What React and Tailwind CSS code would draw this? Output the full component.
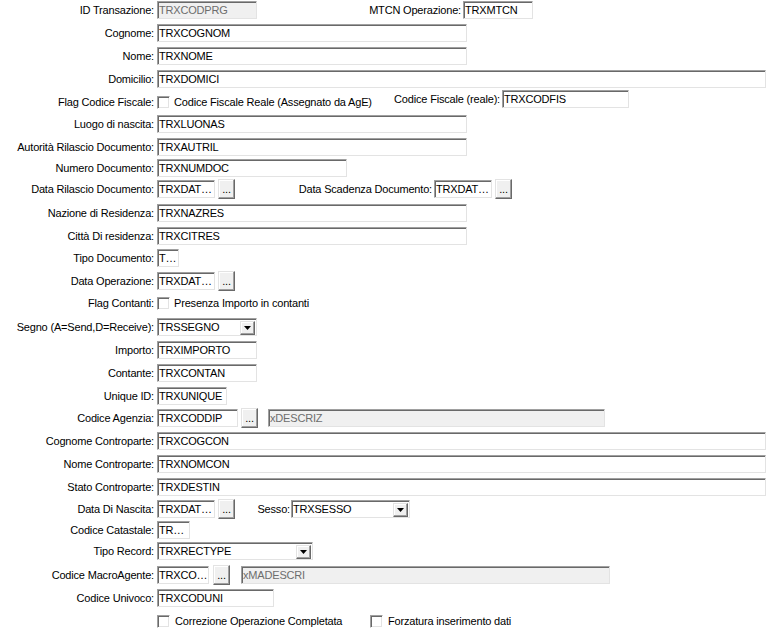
import React from 'react';

// Classic WinForms-style data entry form (sunken edits, "..." pickers, combos)

function Label({ children }) {
    return <div className="w-[154px] shrink-0 text-right whitespace-nowrap mr-[3px]">{children}</div>;
}

function Box({ w, text, disabled, className = '' }) {
    return (
        <div
            className={`${w} ${className} h-[18px] shrink-0 flex items-center pl-[1px] overflow-hidden whitespace-nowrap border border-t-[#a0a0a0] border-l-[#a0a0a0] border-b-[#e3e3e3] border-r-[#e3e3e3] shadow-[inset_1px_1px_0_#696969] ${disabled ? 'bg-[#f0f0f0] text-[#6d6d6d]' : 'bg-white text-black'}`}
        >
            {text}
        </div>
    );
}

function Combo({ w, text, className = '' }) {
    return (
        <div
            className={`${w} ${className} h-[18px] shrink-0 flex items-center justify-between pl-[1px] bg-white border border-t-[#a0a0a0] border-l-[#a0a0a0] border-b-[#e3e3e3] border-r-[#e3e3e3] shadow-[inset_1px_1px_0_#696969]`}
        >
            <span className="whitespace-nowrap">{text}</span>
            <div className="w-[15px] h-[14px] mr-[1px] mt-[1px] flex items-center justify-center bg-[#f0f0f0] border border-t-[#e3e3e3] border-l-[#e3e3e3] border-b-[#696969] border-r-[#696969] shadow-[inset_-1px_-1px_0_#a0a0a0,inset_1px_1px_0_#ffffff]">
                <svg width="7" height="4" viewBox="0 0 7 4">
                    <polygon points="0,0 7,0 3.5,4" fill="#000" />
                </svg>
            </div>
        </div>
    );
}

function Dots({ className = 'ml-[3px]' }) {
    return (
        <div className={`${className} w-[17px] h-[20px] shrink-0 flex items-end justify-center pb-[3px] leading-none bg-[#f0f0f0] border border-t-[#e3e3e3] border-l-[#e3e3e3] border-b-[#696969] border-r-[#696969] shadow-[inset_-1px_-1px_0_#a0a0a0,inset_1px_1px_0_#ffffff]`}>
            ...
        </div>
    );
}

function Check() {
    return (
        <div className="w-[13px] h-[13px] shrink-0 bg-white border border-t-[#a0a0a0] border-l-[#a0a0a0] border-b-[#ffffff] border-r-[#ffffff] shadow-[inset_1px_1px_0_#696969,inset_-1px_-1px_0_#e3e3e3]" />
    );
}

export default function App() {
    return (
        <div className="w-[768px] h-[631px] overflow-hidden bg-white text-black text-[11px] leading-[13px] tracking-[-0.18px] font-['Liberation_Sans',Arial,sans-serif]">
            <div className="flex items-center h-[18px] mt-[1px]">
                <Label>ID Transazione:</Label>
                <Box w="w-[100px]" text="TRXCODPRG" disabled />
                <div className="w-[204px] shrink-0 text-right whitespace-nowrap">MTCN Operazione:</div>
                <Box w="w-[70px]" className="ml-[2px]" text="TRXMTCN" />
            </div>
            <div className="flex items-center h-[18px] mt-[5px]">
                <Label>Cognome:</Label>
                <Box w="w-[310px]" text="TRXCOGNOM" />
            </div>
            <div className="flex items-center h-[18px] mt-[5px]">
                <Label>Nome:</Label>
                <Box w="w-[310px]" text="TRXNOME" />
            </div>
            <div className="flex items-center h-[18px] mt-[5px]">
                <Label>Domicilio:</Label>
                <Box w="w-[609px]" text="TRXDOMICI" />
            </div>

            <div className="flex items-start h-[21px] mt-[2px]">
                <div className="flex items-center h-[18px] mt-[3px] w-[372px] shrink-0">
                    <Label>Flag Codice Fiscale:</Label>
                    <Check />
                    <span className="ml-[4px] whitespace-nowrap">Codice Fiscale Reale (Assegnato da AgE)</span>
                </div>
                <div className="flex items-center h-[18px]">
                    <div className="w-[128px] shrink-0 text-right whitespace-nowrap">Codice Fiscale (reale):</div>
                    <Box w="w-[127px]" className="ml-[2px]" text="TRXCODFIS" />
                </div>
            </div>

            <div className="flex items-center h-[18px] mt-[4px]">
                <Label>Luogo di nascita:</Label>
                <Box w="w-[310px]" text="TRXLUONAS" />
            </div>
            <div className="flex items-center h-[18px] mt-[5px]">
                <Label>Autorità Rilascio Documento:</Label>
                <Box w="w-[310px]" text="TRXAUTRIL" />
            </div>
            <div className="flex items-center h-[18px] mt-[3px]">
                <Label>Numero Documento:</Label>
                <Box w="w-[190px]" text="TRXNUMDOC" />
            </div>
            <div className="flex items-center h-[18px] mt-[3px]">
                <Label>Data Rilascio Documento:</Label>
                <Box w="w-[58px]" text="TRXDAT…" />
                <Dots />
                <div className="w-[197px] shrink-0 text-right whitespace-nowrap">Data Scadenza Documento:</div>
                <Box w="w-[58px]" className="ml-[2px]" text="TRXDAT…" />
                <Dots />
            </div>
            <div className="flex items-center h-[18px] mt-[6px]">
                <Label>Nazione di Residenza:</Label>
                <Box w="w-[310px]" text="TRXNAZRES" />
            </div>
            <div className="flex items-center h-[18px] mt-[5px]">
                <Label>Città Di residenza:</Label>
                <Box w="w-[310px]" text="TRXCITRES" />
            </div>
            <div className="flex items-center h-[18px] mt-[4px]">
                <Label>Tipo Documento:</Label>
                <Box w="w-[22px]" text="T…" />
            </div>
            <div className="flex items-center h-[18px] mt-[5px]">
                <Label>Data Operazione:</Label>
                <Box w="w-[58px]" text="TRXDAT…" />
                <Dots />
            </div>
            <div className="flex items-center h-[18px] mt-[4px]">
                <Label>Flag Contanti:</Label>
                <Check />
                <span className="ml-[4px] whitespace-nowrap">Presenza Importo in contanti</span>
            </div>
            <div className="flex items-center h-[18px] mt-[6px]">
                <Label>Segno (A=Send,D=Receive):</Label>
                <Combo w="w-[100px]" text="TRSSEGNO" />
            </div>
            <div className="flex items-center h-[18px] mt-[5px]">
                <Label>Importo:</Label>
                <Box w="w-[100px]" text="TRXIMPORTO" />
            </div>
            <div className="flex items-center h-[18px] mt-[5px]">
                <Label>Contante:</Label>
                <Box w="w-[100px]" text="TRXCONTAN" />
            </div>
            <div className="flex items-center h-[18px] mt-[5px]">
                <Label>Unique ID:</Label>
                <Box w="w-[70px]" text="TRXUNIQUE" />
            </div>
            <div className="flex items-center h-[18px] mt-[4px]">
                <Label>Codice Agenzia:</Label>
                <Box w="w-[81px]" text="TRXCODDIP" />
                <Dots />
                <Box w="w-[337px]" className="ml-[10px]" text="xDESCRIZ" disabled />
            </div>
            <div className="flex items-center h-[18px] mt-[5px]">
                <Label>Cognome Controparte:</Label>
                <Box w="w-[609px]" text="TRXCOGCON" />
            </div>
            <div className="flex items-center h-[18px] mt-[5px]">
                <Label>Nome Controparte:</Label>
                <Box w="w-[609px]" text="TRXNOMCON" />
            </div>
            <div className="flex items-center h-[18px] mt-[5px]">
                <Label>Stato Controparte:</Label>
                <Box w="w-[609px]" text="TRXDESTIN" />
            </div>
            <div className="flex items-center h-[18px] mt-[4px]">
                <Label>Data Di Nascita:</Label>
                <Box w="w-[58px]" text="TRXDAT…" />
                <Dots />
                <div className="w-[55px] shrink-0 text-right whitespace-nowrap">Sesso:</div>
                <Combo w="w-[119px]" className="ml-[1px]" text="TRXSESSO" />
            </div>
            <div className="flex items-center h-[18px] mt-[3px]">
                <Label>Codice Catastale:</Label>
                <Box w="w-[33px]" text="TR…" />
            </div>
            <div className="flex items-center h-[18px] mt-[3px]">
                <Label>Tipo Record:</Label>
                <Combo w="w-[156px]" text="TRXRECTYPE" />
            </div>
            <div className="flex items-center h-[18px] mt-[6px]">
                <Label>Codice MacroAgente:</Label>
                <Box w="w-[52px]" text="TRXCO…" />
                <Dots className="ml-[4px]" />
                <Box w="w-[369px]" className="ml-[11px]" text="xMADESCRI" disabled />
            </div>
            <div className="flex items-center h-[18px] mt-[5px]">
                <Label>Codice Univoco:</Label>
                <Box w="w-[117px]" text="TRXCODUNI" />
            </div>
            <div className="flex items-center h-[18px] mt-[5px] pl-[157px]">
                <Check />
                <span className="ml-[5px] w-[195px] shrink-0 whitespace-nowrap">Correzione Operazione Completata</span>
                <Check />
                <span className="ml-[5px] whitespace-nowrap">Forzatura inserimento dati</span>
            </div>
        </div>
    );
}
